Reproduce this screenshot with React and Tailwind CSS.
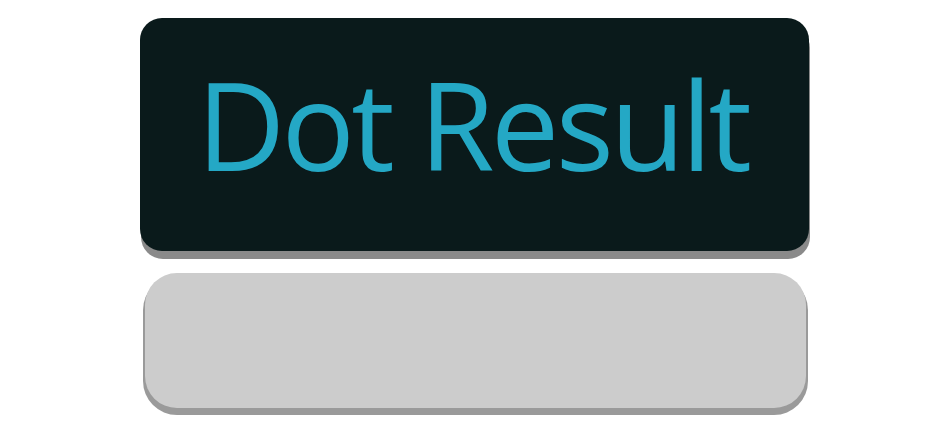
export default function App() {
  return (
    <div className="w-[951px] h-[432px] bg-white flex flex-col pt-[18px]" style={{ fontFamily: '"Open Sans", "Noto Sans", sans-serif' }}>
      <div className="ml-[140px] w-[669px] h-[233px] rounded-[22px] bg-[#0a1a1b] shadow-[1px_8px_0_0_#8a8a8a] flex items-center justify-center">
        <span className="text-[122px] leading-none text-[#24a8c5] tracking-[-0.03em] -mt-[22px] pr-[4px]">Dot Result</span>
      </div>
      <div className="ml-[145px] mt-[22px] w-[661px] h-[135px] rounded-[32px] bg-[#cccccc] shadow-[0_5px_0_2px_#9a9a9a]"></div>
    </div>
  );
}
